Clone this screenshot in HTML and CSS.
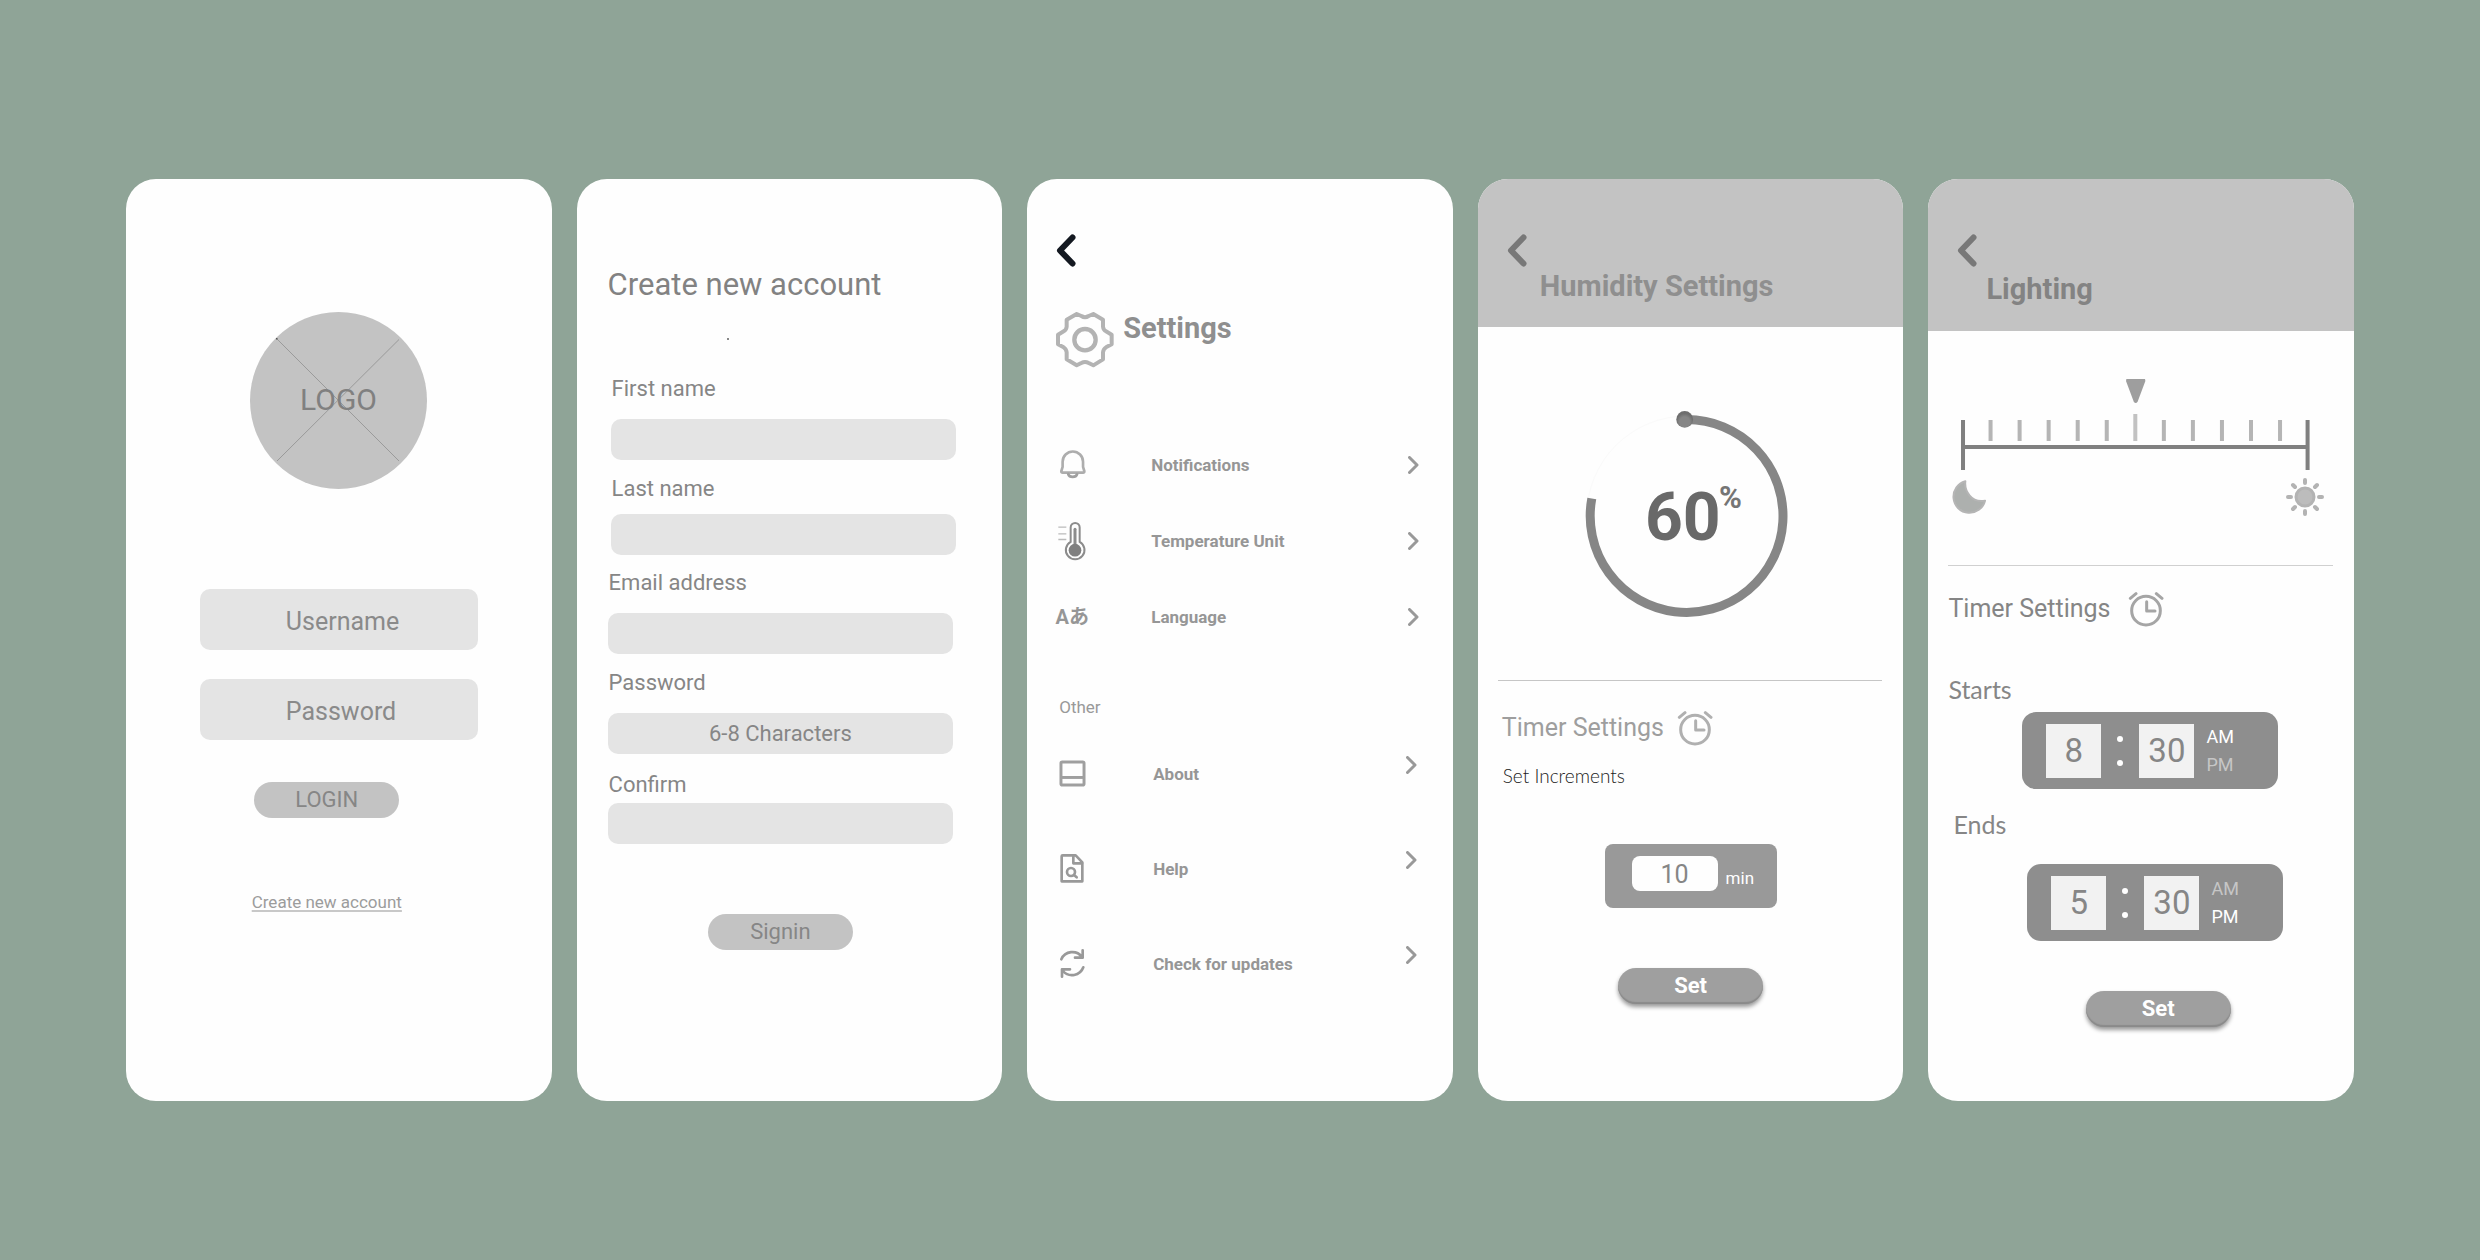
FILE: index.html
```html
<!DOCTYPE html>
<html lang="en">
<head>
<meta charset="utf-8">
<meta name="viewport" content="width=device-width, initial-scale=1">
<title>Greenhouse app wireframes</title>
<link rel="stylesheet" href="styles.css">
</head>
<body>
<svg class="sprite" aria-hidden="true">
  <symbol id="chevron-left" viewBox="0 0 20 33"><path d="M16.500 3.500 4 16.500l12.500 13" fill="none" stroke="currentColor" stroke-width="6" stroke-linecap="round" stroke-linejoin="round"/></symbol>
  <symbol id="chevron-right" viewBox="0 0 11 18"><path d="M1.500 1.500 9 9l-7.500 7.500" fill="none" stroke="currentColor" stroke-width="3" stroke-linecap="round" stroke-linejoin="round"/></symbol>
  <symbol id="alarm" viewBox="618 218 108 108"><g fill="none" stroke="currentColor" stroke-width="9" stroke-linecap="round" stroke-linejoin="round"><circle cx="672" cy="277" r="43"/><path d="M674 250v28h25M625 240l17-14M703 226l17 14"/></g></symbol>
</svg>
<main class="board">

  <section class="card" aria-label="Log in">
    <form class="login">
      <svg class="login-logo" viewBox="0 0 177 177" role="img" aria-label="Logo">
        <circle cx="88.500" cy="88.500" r="88.500" fill="#c3c3c3"/>
        <path d="M27 27 149 149M149 27.500 27 149" stroke="#9a9a9a" stroke-width="1"/>
        <path d="M26 26h1.500v1.500h-1.500z" fill="#555"/>
        <text class="logo-text" x="88.500" y="98" text-anchor="middle">LOGO</text>
      </svg>
      <div class="login-fields">
        <input class="login-input" type="text" placeholder="Username" aria-label="Username">
        <input class="login-input" type="password" placeholder="Password" aria-label="Password">
      </div>
      <div class="login-actions">
        <button class="button" type="button">LOGIN</button>
        <a class="create-link" href="#signup">Create new account</a>
      </div>
    </form>
  </section>

  <section class="card" id="signup">
    <form class="signup">
      <h1 class="signup-title">Create new account</h1>
      <span class="dot"></span>
      <div class="fields fields-name">
        <div class="field"><label for="first">First name</label><input id="first" type="text"></div>
        <div class="field field-snug"><label for="last">Last name</label><input id="last" type="text"></div>
      </div>
      <div class="fields">
        <div class="field"><label for="email">Email address</label><input id="email" type="email"></div>
        <div class="field"><label for="pass">Password</label><input id="pass" type="password" placeholder="6-8 Characters"></div>
        <div class="field field-tight"><label for="confirm">Confirm</label><input id="confirm" type="password"></div>
        <button class="button signup-button" type="button">Signin</button>
      </div>
    </form>
  </section>

  <section class="card">
    <header class="settings-head">
      <a class="back back-dark" href="#back" aria-label="Back"><svg><use href="#chevron-left"/></svg></a>
      <div class="settings-title">
        <svg class="gear" viewBox="108 426 174 168" fill="none" stroke="#b3b3b3" stroke-linejoin="round" aria-hidden="true">
          <path stroke-width="12" d="M170 432 184 438Q195 445 206 438L220 432 249 449V470Q250 480 258 484L275 494V523L258 532Q250 537 249 547V568L220 586 206 579Q195 573 184 579L170 586 140 568V547Q139 537 131 532L114 523V494L131 484Q139 480 140 470V449Z"/>
          <circle cx="195" cy="509" r="32" stroke-width="13"/>
        </svg>
        <h1 class="title">Settings</h1>
      </div>
    </header>
    <nav class="menu">
      <a class="menu-item" href="#notifications">
        <svg class="icon" width="29" height="32" viewBox="112 832 88 96" fill="none" stroke="#adadad" stroke-width="8" stroke-linejoin="round" stroke-linecap="round"><path d="M126 870a31 31 0 0 1 62 0v16l4 13q0 4-4 4h-62q-4 0-4-4l4-13Z"/><path stroke="#a0a0a0" d="M143 908a14 11 0 0 0 27 0"/></svg>
        <span>Notifications</span>
        <svg class="go"><use href="#chevron-right"/></svg>
      </a>
      <a class="menu-item" href="#temperature">
        <svg class="icon" width="30" height="41" viewBox="112 1060 90 122" fill="none" stroke="#8c8c8c" stroke-width="6"><path d="M153 1079a13.500 13.500 0 0 1 27 0v43a28 28 0 1 1-27 0Z"/><path d="M166 1084v60" stroke-width="9" stroke-linecap="round"/><circle cx="166" cy="1147" r="19" fill="#808080" stroke="none"/><path stroke="#bbb" stroke-width="4" d="M116 1078h24M116 1098h24M116 1115h24"/></svg>
        <span>Temperature Unit</span>
        <svg class="go"><use href="#chevron-right"/></svg>
      </a>
      <a class="menu-item" href="#language">
        <span class="icon glyphs" aria-hidden="true">Aあ</span>
        <span>Language</span>
        <svg class="go"><use href="#chevron-right"/></svg>
      </a>
    </nav>
    <h2 class="menu-label">Other</h2>
    <nav class="menu menu-other">
      <a class="menu-item" href="#about">
        <svg class="icon" width="29" height="29" viewBox="112 361 88 88" fill="none" stroke="#9f9f9f" stroke-width="9"><rect x="121" y="370" width="70" height="70" rx="4"/><path d="M121 417h70"/></svg>
        <span>About</span>
        <svg class="go"><use href="#chevron-right"/></svg>
      </a>
      <a class="menu-item" href="#help">
        <svg class="icon" width="26" height="31" viewBox="120 633 78 93" fill="none" stroke="#999" stroke-width="8" stroke-linejoin="round" stroke-linecap="round"><path d="M131 640h39l20 21v57h-62v-75q0-3 3-3Z"/><path d="M163 642v22h26"/><circle cx="156" cy="690" r="12"/><path d="m165 699 8 7"/></svg>
        <span>Help</span>
        <svg class="go"><use href="#chevron-right"/></svg>
      </a>
      <a class="menu-item" href="#updates">
        <svg class="icon" width="27" height="31" viewBox="116 923 81 93" fill="none" stroke="#999" stroke-width="8" stroke-linejoin="round" stroke-linecap="round"><path d="M123 957A36 36 0 0 1 185 950M187 930v22h-23M189 981A36 36 0 0 1 128 992M125 1009v-22h24"/></svg>
        <span>Check for updates</span>
        <svg class="go"><use href="#chevron-right"/></svg>
      </a>
    </nav>
  </section>

  <section class="card">
    <header class="bar">
      <a class="back" href="#back" aria-label="Back"><svg><use href="#chevron-left"/></svg></a>
      <h1 class="title">Humidity Settings</h1>
    </header>
    <svg class="gauge" viewBox="1 0 214 216" role="img" aria-label="Humidity 60%">
      <defs><radialGradient id="knob" cy=".65"><stop offset=".6" stop-color="#868686"/><stop offset="1" stop-color="#6e6e6e"/></radialGradient></defs>
      <circle cx="103.700" cy="111" r="100" fill="none" stroke="#fafafa"/>
      <path d="M103.700 14.600A96.400 96.400 0 1 1 8.800 93.500" fill="none" stroke="#868686" stroke-width="9"/>
      <circle cx="101.700" cy="14.400" r="8.400" fill="url(#knob)"/>
      <text class="gauge-value" x="62" y="135">60</text>
      <text class="gauge-unit" x="136" y="103">%</text>
    </svg>
    <hr class="rule">
    <form class="timer">
      <h2 class="timer-title">Timer Settings <svg class="alarm"><use href="#alarm"/></svg></h2>
      <label class="increments" for="minutes">Set Increments</label>
      <div class="minutes">
        <input id="minutes" type="text" value="10">
        <span>min</span>
      </div>
      <button class="button button-set" type="button">Set</button>
    </form>
  </section>

  <section class="card">
    <header class="bar bar-lighting">
      <a class="back" href="#back" aria-label="Back"><svg><use href="#chevron-left"/></svg></a>
      <h1 class="title">Lighting</h1>
    </header>
    <div class="dimmer">
      <input class="dimmer-range" type="range" min="0" max="12" value="6" aria-label="Brightness">
      <svg class="dimmer-scale" viewBox="0 0 348 56" aria-hidden="true">
        <path d="M29.500 6v21M58.500 6v21M87.500 6v21M116.500 6v21M145.500 6v21M202.500 6v21M231.500 6v21M260.500 6v21M289.500 6v21M318.500 6v21" stroke="#b5b5b5" stroke-width="4"/>
        <path d="M174 0v27" stroke="#c2c2c2" stroke-width="4"/>
        <path d="M2 6v50M346 6v50M2 33h344" stroke="#808080" stroke-width="4"/>
      </svg>
    </div>
    <div class="dimmer-ends">
      <svg width="36" height="36" viewBox="92 928 108 108" aria-hidden="true"><path d="M135 935A48 48 0 1 0 194 993Q164 998 148 978 132 958 135 935Z" fill="#adb0ae" stroke="#b5b5b5" stroke-width="6" stroke-linejoin="round"/></svg>
      <svg width="38" height="38" viewBox="-57 -57 114 114" stroke="#b3b3b3" stroke-linecap="round" aria-hidden="true"><circle r="27" fill="#bcbcbc" stroke-width="9"/><path stroke-width="12" d="M0-51v9M0 42v9M-51 0h9M42 0h9M-36-36l6 6M30 30l6 6M36-36l-6 6M-30 30l-6 6"/></svg>
    </div>
    <hr class="rule rule-light">
    <form class="schedule">
      <h2 class="timer-title timer-title-dark">Timer Settings <svg class="alarm"><use href="#alarm"/></svg></h2>
      <div class="slot">
        <label class="slot-label" for="start-h">Starts</label>
        <div class="clock">
          <input id="start-h" type="text" value="8">
          <span class="colon"></span>
          <input type="text" value="30" aria-label="Start minutes">
          <div class="period">
            <label><input type="radio" name="start" checked><span>AM</span></label>
            <label><input type="radio" name="start"><span>PM</span></label>
          </div>
        </div>
      </div>
      <div class="slot slot-end">
        <label class="slot-label" for="end-h">Ends</label>
        <div class="clock">
          <input id="end-h" type="text" value="5">
          <span class="colon"></span>
          <input type="text" value="30" aria-label="End minutes">
          <div class="period">
            <label><input type="radio" name="end"><span>AM</span></label>
            <label><input type="radio" name="end" checked><span>PM</span></label>
          </div>
        </div>
      </div>
      <button class="button button-set" type="button">Set</button>
    </form>
  </section>

</main>
</body>
</html>
```
FILE: styles.css
```css
* { box-sizing: border-box; }

body {
  margin: 0;
  background: #8fa497;
  color: #868686;
  font-family: Roboto, "Liberation Sans", sans-serif;
}

h1, h2 { margin: 0; font-weight: 400; }
a { color: inherit; text-decoration: none; }
svg { display: block; flex: none; }
input, button { font: inherit; color: inherit; border: 0; margin: 0; padding: 0; }
input::placeholder { color: inherit; opacity: 1; }
.sprite { width: 0; height: 0; position: absolute; }

.board {
  display: grid;
  grid-template-columns: repeat(5, minmax(0, 1fr));
  gap: 25px;
  min-height: 100vh;
  padding: 179px 126px 159px;
}

.card {
  display: flex;
  flex-direction: column;
  background: #fefefe;
  border-radius: 30px;
  overflow: hidden;
}

/* Shared controls */
.button {
  width: 145px;
  height: 36px;
  border-radius: 18px;
  background: #c3c3c3;
  color: #868686;
  font-size: 22px;
  line-height: 26px;
}

.button-set {
  background: #9f9f9f;
  color: #fff;
  font-weight: 700;
  box-shadow: inset 0 -2px 1px #8a8a8a, 0 3px 4px rgba(0, 0, 0, .4);
}

.back { display: block; width: 20px; color: #787878; }
.back svg { width: 20px; height: 33px; }
.back-dark { color: #141921; }

.title {
  font-size: 29px;
  line-height: 33px;
  font-weight: 700;
  color: #8f8f8f;
}

.rule {
  width: auto;
  height: 1px;
  margin: 59px 21px 0 20px;
  border: 0;
  background: #c6c6c6;
}

.rule-light { margin-top: 49px; background: #d0d0d0; }

/* Log in */
.login {
  display: flex;
  flex-direction: column;
  align-items: center;
  padding-top: 133px;
}

.login-logo { width: 177px; height: 177px; }
.logo-text { font-size: 30px; fill: #808080; }

.login-fields {
  display: grid;
  gap: 29px;
  margin-top: 100px;
}

.login-input {
  width: 278px;
  height: 61px;
  padding: 4px 10px 0 86px;
  border-radius: 10px;
  background: #e4e4e4;
  color: #8a8a8a;
  font-size: 25px;
}

.login-actions {
  display: flex;
  flex-direction: column;
  align-items: center;
  gap: 74px;
  margin-top: 42px;
  padding-right: 24px;
}

.create-link {
  color: #9c9c9c;
  font-size: 17px;
  line-height: 20px;
  text-decoration: underline #c8c8c8 2px;
  text-underline-offset: 2px;
}

/* Sign up */
.signup { padding-top: 87px; }

.signup-title {
  padding-left: 31px;
  font-size: 31px;
  line-height: 38px;
  color: #828282;
}

.dot {
  display: block;
  width: 2px;
  height: 2px;
  margin: 34px 0 36px 150px;
  background: #888;
}

.fields {
  display: grid;
  gap: 16px;
  padding: 0 49px 0 31px;
}

.fields-name { padding: 0 46px 15px 34px; }

.field { display: grid; gap: 17px; }
.field-snug { gap: 12px; }
.field-tight { gap: 5px; margin-top: 2px; }

.field label {
  padding-left: 1px;
  font-size: 22px;
  line-height: 26px;
}

.field input {
  width: 100%;
  height: 41px;
  border-radius: 10px;
  background: #e4e4e4;
  font-size: 22px;
  text-align: center;
}

.signup-button { justify-self: center; margin-top: 54px; }

/* Settings */
.settings-head { padding: 55px 29px 0; }
.settings-title { display: flex; gap: 9px; margin-top: 45px; }
.gear { width: 58px; height: 56px; }

.menu { padding: 0 34px 0 30px; margin-top: 59px; }

.menu-item {
  display: grid;
  grid-template-columns: 30px 1fr auto;
  column-gap: 64px;
  align-items: center;
  height: 76px;
  color: #969696;
  font-size: 17px;
  font-weight: 700;
}

.icon { justify-self: center; }

.glyphs {
  font: 700 20px/24px Roboto, "Noto Sans CJK JP", sans-serif;
  white-space: nowrap;
}

.go { width: 11px; height: 18px; color: #999; }

.menu-label {
  margin-top: 42px;
  padding-left: 32px;
  color: #999;
  font-size: 17px;
  line-height: 20px;
}

.menu-other { margin-top: 9px; padding: 0 36px 0 30px; }
.menu-other .menu-item { height: 95px; column-gap: 66px; }
.menu-other .go { margin-bottom: 18px; }

/* Humidity */
.bar {
  padding: 55px 29px 24px;
  background: #c3c3c3;
}

.bar .title { margin: 3px 0 0 33px; }
.bar-lighting { padding-bottom: 25px; }
.bar-lighting .title { margin: 6px 0 0 29px; color: #838383; }

.gauge {
  width: 214px;
  height: 216px;
  margin-top: 78px;
  align-self: center;
}

.gauge-value { font-size: 66px; font-weight: 700; fill: #696969; }
.gauge-unit { font-size: 31px; font-weight: 700; fill: #757575; }

.timer {
  display: flex;
  flex-direction: column;
  align-items: center;
  padding: 29px 24px 0;
}

.timer-title {
  display: flex;
  align-items: center;
  align-self: flex-start;
  gap: 13px;
  font-size: 25px;
  line-height: 36px;
  color: #9e9e9e;
}

.timer-title-dark { gap: 17px; color: #858585; }
.alarm { width: 36px; height: 36px; color: #b0b0b0; }
.timer-title-dark .alarm { color: #a5a5a5; }

.increments {
  align-self: flex-start;
  margin-top: 18px;
  padding-left: 1px;
  color: #222;
  font-family: Lato, "Liberation Sans", sans-serif;
  font-size: 19px;
  font-weight: 300;
  line-height: 24px;
}

.minutes {
  display: flex;
  gap: 8px;
  width: 172px;
  height: 64px;
  margin: 56px 0 60px;
  padding: 12px 24px 0 27px;
  border-radius: 8px;
  background: #999;
  color: #fff;
  font-size: 17px;
  line-height: 44px;
}

.minutes input {
  width: 86px;
  height: 35px;
  padding-top: 2px;
  border-radius: 8px;
  background: #fefefe;
  color: #868686;
  font-size: 25px;
  text-align: center;
}

/* Lighting */
.dimmer { padding: 48px 44px 0 33px; }

.dimmer-range {
  display: block;
  width: 100%;
  height: 24px;
  appearance: none;
  background: none;
}

.dimmer-range::-webkit-slider-thumb {
  appearance: none;
  width: 20px;
  height: 25px;
  background: #9e9e9e;
  clip-path: path("M2 0H18Q20 0 19.500 3L12 23Q10 26 8 23L.5 3Q0 0 2 0Z");
}

.dimmer-scale { width: 100%; margin-top: 11px; }

.dimmer-ends {
  display: flex;
  align-items: center;
  justify-content: space-between;
  margin-top: 8px;
  padding: 0 30px 0 23px;
}

.schedule {
  display: flex;
  flex-direction: column;
  padding: 25px 20px 0;
}

.slot { margin-top: 48px; }

.slot-label {
  display: block;
  font-family: Lato, "Liberation Sans", sans-serif;
  font-size: 25px;
  line-height: 28px;
}

.clock {
  display: flex;
  align-items: center;
  width: 256px;
  height: 77px;
  margin: 9px 0 0 74px;
  padding-left: 24px;
  border-radius: 14px;
  background: #8e8e8e;
}

.clock input[type="text"] {
  width: 55px;
  height: 54px;
  background: #f2f2f2;
  font-size: 33px;
  text-align: center;
}

.slot-end { margin-top: 21px; padding-left: 5px; }
.slot-end .clock { margin-top: 26px; }

.colon {
  display: grid;
  align-content: space-between;
  justify-content: center;
  width: 38px;
  height: 30px;
}

.colon::before, .colon::after {
  content: "";
  width: 6px;
  height: 6px;
  border-radius: 50%;
  background: #fff;
}

.period {
  margin-left: 12px;
  font-size: 18px;
  line-height: 28px;
}

.period label { display: block; }
.period input { position: absolute; appearance: none; }
.period span { color: #c6c6c6; }
.period input:checked + span { color: #fff; }

.schedule .button-set {
  align-self: center;
  margin: 50px 0 0 34px;
}
```
